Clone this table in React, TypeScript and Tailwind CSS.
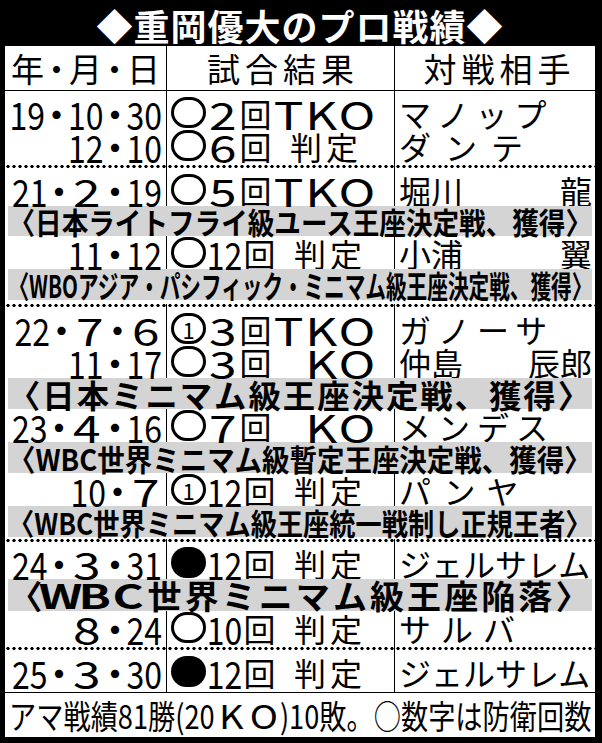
import React, { useLayoutEffect, useRef, useState } from 'react';

type Mark = 'win' | 'loss' | 'def';
type Res = 'TKO' | 'KO' | '判定';

type Row =
  | { t: 'm'; h: string; date: string[]; mark: Mark; rnd: string; res: Res; opp: string | [string, string]; sp?: string }
  | { t: 'b'; h: string; text: React.ReactNode; cls: string }
  | { t: 'g'; h: string }
  | { t: 's'; h: string }
  | { t: 'd' };

// wide latin letter inside a band or the note line
const WL = ({ c, w = 'w-[1em]' }: { c: string; w?: string }) => (
  <span className={`inline-flex ${w} justify-center`}>
    <span className="inline-block scale-x-[1.4]">{c}</span>
  </span>
);

const rows: Row[] = [
  { t: 'g', h: 'h-[5px]' },
  { t: 'm', h: 'h-[33px]', date: ['19', '10', '30'], mark: 'win', rnd: '2', res: 'TKO', opp: 'マノップ', sp: 'tracking-[7px]' },
  { t: 'm', h: 'h-[33px]', date: ['12', '10'], mark: 'win', rnd: '6', res: '判定', opp: 'ダンテ', sp: 'tracking-[14px]' },
  { t: 'g', h: 'h-[3px]' },
  { t: 'd' },
  { t: 'g', h: 'h-[5px]' },
  { t: 'm', h: 'h-[33px]', date: ['21', '2', '19'], mark: 'win', rnd: '5', res: 'TKO', opp: ['堀川', '龍'] },
  { t: 'b', h: 'h-[30px]', text: '〈日本ライトフライ級ユース王座決定戦、獲得〉', cls: 'text-[30px]' },
  { t: 'm', h: 'h-[33px]', date: ['11', '12'], mark: 'win', rnd: '12', res: '判定', opp: ['小浦', '翼'] },
  { t: 'b', h: 'h-[31px]', text: '〈WBOアジア・パシフィック・ミニマム級王座決定戦、獲得〉', cls: 'text-[31px]' },
  { t: 's', h: 'h-[4px]' },
  { t: 'd' },
  { t: 'g', h: 'h-[5px]' },
  { t: 'm', h: 'h-[33px]', date: ['22', '7', '6'], mark: 'def', rnd: '3', res: 'TKO', opp: 'ガノーサ', sp: 'tracking-[7px]' },
  { t: 'm', h: 'h-[33px]', date: ['11', '17'], mark: 'win', rnd: '3', res: 'KO', opp: ['仲島', '辰郎'] },
  { t: 'b', h: 'h-[31px]', text: '〈日本ミニマム級王座決定戦、獲得〉', cls: 'text-[32px] tracking-[2px]' },
  { t: 'm', h: 'h-[33px]', date: ['23', '4', '16'], mark: 'win', rnd: '7', res: 'KO', opp: 'メンデス', sp: 'tracking-[7px]' },
  { t: 'b', h: 'h-[31px]', text: '〈WBC世界ミニマム級暫定王座決定戦、獲得〉', cls: 'text-[30px]' },
  { t: 'm', h: 'h-[33px]', date: ['10', '7'], mark: 'def', rnd: '12', res: '判定', opp: 'パンヤ', sp: 'tracking-[11px]' },
  { t: 'b', h: 'h-[31px]', text: '〈WBC世界ミニマム級王座統一戦制し正規王者〉', cls: 'text-[30px]' },
  { t: 's', h: 'h-[2px]' },
  { t: 'd' },
  { t: 'g', h: 'h-[4px]' },
  { t: 'm', h: 'h-[33px]', date: ['24', '3', '31'], mark: 'loss', rnd: '12', res: '判定', opp: 'ジェルサレム' },
  {
    t: 'b',
    h: 'h-[32px]',
    text: (
      <>
        〈<WL c="W" />
        <WL c="B" />
        <WL c="C" />
        世界ミニマム級王座陥落〉
      </>
    ),
    cls: 'text-[33px] tracking-[3px]',
  },
  { t: 'm', h: 'h-[33px]', date: ['8', '24'], mark: 'win', rnd: '10', res: '判定', opp: 'サルバ', sp: 'tracking-[10px]' },
  { t: 'g', h: 'h-[3px]' },
  { t: 'd' },
  { t: 'g', h: 'h-[4px]' },
  { t: 'm', h: 'h-[35px]', date: ['25', '3', '30'], mark: 'loss', rnd: '12', res: '判定', opp: 'ジェルサレム' },
  { t: 'g', h: 'h-[3px]' },
];

// squeezes a line of text so it fills the width of its box
const FitText = ({ children, className }: { children: React.ReactNode; className: string }) => {
  const boxRef = useRef<HTMLDivElement>(null);
  const textRef = useRef<HTMLSpanElement>(null);
  const [scale, setScale] = useState(1);

  useLayoutEffect(() => {
    const measure = () => {
      if (!boxRef.current || !textRef.current) return;
      const w = textRef.current.offsetWidth;
      if (w > 0) setScale(boxRef.current.clientWidth / w);
    };
    measure();
    document.fonts?.ready.then(measure);
  }, [children]);

  return (
    <div ref={boxRef} className="flex w-full justify-center">
      <span
        ref={textRef}
        className={`shrink-0 whitespace-nowrap ${className}`}
        style={{ transform: `scaleX(${scale})` }}
      >
        {children}
      </span>
    </div>
  );
};

const Wide = ({ c, w = 'w-[33px]' }: { c: string; w?: string }) => (
  <span className={`inline-flex ${w} shrink-0 justify-center`}>
    <span className="inline-block scale-x-[1.55] scale-y-[1.2]">{c}</span>
  </span>
);

const Num = ({ n }: { n: string }) => <span className="inline-block scale-y-[1.2]">{n}</span>;

const Dot = () => <span className="inline-flex w-[23px] shrink-0 justify-center font-bold">・</span>;

const MarkIcon = ({ kind }: { kind: Mark }) => {
  if (kind === 'loss') return <span className="inline-block h-[31px] w-[35px] shrink-0 rounded-full bg-black" />;
  return (
    <span className="inline-flex h-[31px] w-[35px] shrink-0 items-center justify-center rounded-full border-[3px] border-black">
      {kind === 'def' && <span className="text-[22px] leading-none">1</span>}
    </span>
  );
};

const Lines = ({ h, className = '' }: { h: string; className?: string }) => (
  <div className={`grid grid-cols-[162px_228px_1fr] ${h} ${className}`}>
    <div className="border-r border-black" />
    <div className="border-r border-black" />
    <div />
  </div>
);

const MatchRow = ({ row }: { row: Extract<Row, { t: 'm' }> }) => (
  <div className={`grid grid-cols-[162px_228px_1fr] ${row.h}`}>
    <div className="flex items-center justify-end border-r border-black pr-[4px]">
      {row.date.map((p, i) => (
        <React.Fragment key={i}>
          {i > 0 && <Dot />}
          {p.length === 1 ? <Wide c={p} /> : <Num n={p} />}
        </React.Fragment>
      ))}
    </div>
    <div className="flex items-center border-r border-black pl-[4px]">
      <MarkIcon kind={row.mark} />
      {row.rnd.length === 1 ? (
        <Wide c={row.rnd} />
      ) : (
        <span className="inline-flex w-[37px] shrink-0 justify-center">
          <Num n={row.rnd} />
        </span>
      )}
      <span className="inline-flex w-[33px] shrink-0 justify-center">回</span>
      {row.res === 'TKO' && (
        <>
          <Wide c="T" />
          <Wide c="K" />
          <Wide c="O" w="w-[38px]" />
        </>
      )}
      {row.res === 'KO' && (
        <>
          <span className="w-[33px] shrink-0" />
          <Wide c="K" />
          <Wide c="O" w="w-[38px]" />
        </>
      )}
      {row.res === '判定' && <span className="ml-[18px] whitespace-nowrap tracking-[4px]">判定</span>}
    </div>
    <div className="flex items-center pl-[4px] pr-[3px]">
      {Array.isArray(row.opp) ? (
        <div className="flex w-full justify-between">
          <span>{row.opp[0]}</span>
          <span>{row.opp[1]}</span>
        </div>
      ) : (
        <span className={`whitespace-nowrap ${row.sp ?? ''}`}>{row.opp}</span>
      )}
    </div>
  </div>
);

const App = () => {
  return (
    <div className="h-[743px] w-[602px] bg-black pb-[6px] pl-[5px] pr-[7px] font-['Noto_Sans_CJK_JP',sans-serif] text-black">
      {/* Title */}
      <div className="flex h-[46px] items-center justify-center pt-[3px] text-[36px] font-bold leading-[40px] tracking-[1px] text-white">
        ◆重岡優大のプロ戦績◆
      </div>

      <div className="flex h-[691px] flex-col bg-white text-[32px] leading-none">
        {/* Header */}
        <div className="grid h-[45px] grid-cols-[162px_228px_1fr] border-b border-black text-[33px]">
          <div className="flex items-center justify-between border-r border-black pl-[6px] pr-[6px]">
            <span>年</span>
            <span className="inline-flex w-[14px] justify-center">・</span>
            <span>月</span>
            <span className="inline-flex w-[14px] justify-center">・</span>
            <span>日</span>
          </div>
          <div className="flex items-center justify-center border-r border-black pl-[5px] tracking-[5px]">試合結果</div>
          <div className="flex items-center justify-center pl-[9px] tracking-[5px]">対戦相手</div>
        </div>

        {rows.map((row, i) => {
          if (row.t === 'm') return <MatchRow key={i} row={row} />;
          if (row.t === 'g') return <Lines key={i} h={row.h} />;
          if (row.t === 's') return <div key={i} className={row.h} />;
          if (row.t === 'd')
            return (
              <Lines
                key={i}
                h="h-[3px]"
                className="bg-[radial-gradient(circle,#000_1.4px,transparent_1.9px)] bg-[length:6px_3px]"
              />
            );
          return (
            <div key={i} className={`mx-[3px] flex items-center bg-[#d4d4d4] ${row.h}`}>
              <FitText className={`font-bold ${row.cls}`}>{row.text}</FitText>
            </div>
          );
        })}

        {/* Footer note */}
        <div className="flex flex-1 items-center border-t border-black px-[4px]">
          <FitText className="text-[33px]">
            アマ戦績81勝(20
            <WL c="K" w="w-[1.2em]" />
            <WL c="O" w="w-[1.2em]" />
            )10敗。○数字は防衛回数
          </FitText>
        </div>
      </div>
    </div>
  );
};

export default App;
